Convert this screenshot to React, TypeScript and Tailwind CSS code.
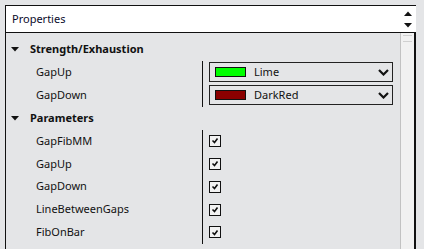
import React from "react";

const font = { fontFamily: '"Noto Sans", "Segoe UI", sans-serif' };

const Caret = () => (
  <svg width="8" height="5" viewBox="0 0 8 5" className="block">
    <polygon points="0,0 8,0 4,4.5" fill="#111" />
  </svg>
);

const Chevron = () => (
  <svg width="11" height="7" viewBox="0 0 11 7" className="block">
    <path d="M1 1 L5.5 5.5 L10 1" fill="none" stroke="#111" strokeWidth="2.2" />
  </svg>
);

const Check = () => (
  <span className="flex h-[12px] w-[12px] items-center justify-center border border-[#111] bg-[#f2f2f2]">
    <svg width="8" height="7" viewBox="0 0 8 7" className="block">
      <path d="M1.5 3.5 L3.5 5.5 L6.5 1.5" fill="none" stroke="#111" strokeWidth="1.6" />
    </svg>
  </span>
);

const ColorSelect = ({ swatch, name }: { swatch: string; name: string }) => (
  <div className="mr-[7px] flex h-[20px] flex-1 items-center border border-[#222] pl-[5px] pr-[3px]">
    <span className="h-[10px] w-[31px] border border-[#111]" style={{ background: swatch }} />
    <span className="ml-[8px] flex-1 text-[11px] text-[#111]">{name}</span>
    <Chevron />
  </div>
);

const Category = ({ title }: { title: string }) => (
  <div className="flex h-[22.875px] items-center">
    <span className="ml-[5px] w-[19px]">
      <Caret />
    </span>
    <span className="text-[11px] font-bold text-[#111]">{title}</span>
  </div>
);

const Prop = ({ label, children }: { label: string; children: React.ReactNode }) => (
  <div className="flex h-[22.875px] items-center">
    <div className="flex h-full w-[197px] items-center border-r border-[#111] pl-[30px] text-[11px] text-[#111]">
      {label}
    </div>
    <div className="flex flex-1 items-center pl-[6px]">{children}</div>
  </div>
);

export default function App() {
  return (
    <div className="h-[249px] w-[424px] overflow-hidden bg-[#e4e5e7] pl-[5px] pt-[5px]" style={font}>
      <div className="flex h-[260px] w-[411px] flex-col border-l border-t border-[#111]">
        <div className="flex h-[27px] items-center border-b border-[#111] bg-white pl-[6px] pr-[4px]">
          <span className="flex-1 text-[11px] text-[#0a0a2a]">Properties</span>
          <div className="flex flex-col gap-[7px]">
            <svg width="8" height="5" viewBox="0 0 8 5" className="block">
              <polygon points="0,5 8,5 4,0.5" fill="#111" />
            </svg>
            <svg width="8" height="5" viewBox="0 0 8 5" className="block">
              <polygon points="0,0 8,0 4,4.5" fill="#111" />
            </svg>
          </div>
        </div>
        <div className="flex flex-1 border-r-2 border-[#111]">
          <div className="flex-1 pt-[5px]">
            <Category title="Strength/Exhaustion" />
            <Prop label="GapUp">
              <ColorSelect swatch="#00ff00" name="Lime" />
            </Prop>
            <Prop label="GapDown">
              <ColorSelect swatch="#8b0000" name="DarkRed" />
            </Prop>
            <Category title="Parameters" />
            <Prop label="GapFibMM">
              <Check />
            </Prop>
            <Prop label="GapUp">
              <Check />
            </Prop>
            <Prop label="GapDown">
              <Check />
            </Prop>
            <Prop label="LineBetweenGaps">
              <Check />
            </Prop>
            <Prop label="FibOnBar">
              <Check />
            </Prop>
          </div>
          <div className="flex w-[14px] flex-col border-l border-[#c2c2c2] bg-[#f1f1f1] pt-[2px]">
            <div className="mx-[2px] h-[7px] border-y border-[#d0d0d0]" />
          </div>
        </div>
      </div>
    </div>
  );
}
